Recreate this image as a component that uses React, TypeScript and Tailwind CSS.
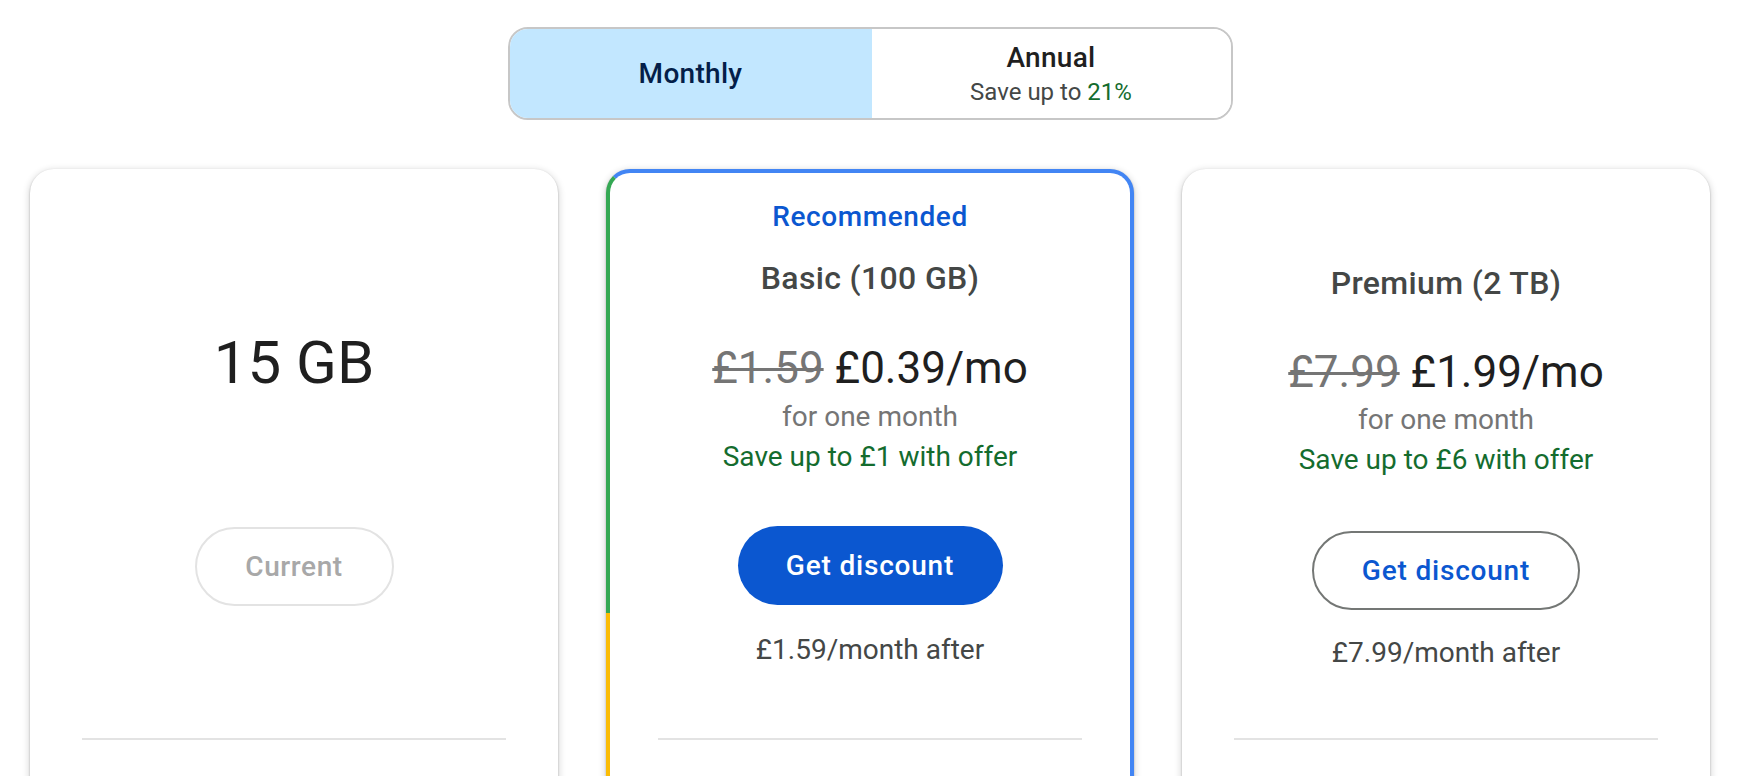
import React from "react";

const font = { fontFamily: "Roboto, 'Noto Sans', Arial, sans-serif" };

function Divider({ inset = "mx-[52px]" }: { inset?: string }) {
  return <div className={`${inset} h-[2px] bg-[#e3e3e3]`} />;
}

export default function App() {
  return (
    <div
      className="h-[776px] w-[1748px] overflow-hidden bg-white font-[Roboto,'Noto_Sans',Arial,sans-serif]"
      style={font}
    >
      <div className="ml-[30px] w-[1680px] pt-[27px]">
        {/* Toggle */}
        <div className="flex justify-center">
          <div className="flex h-[93px] w-[725px] overflow-hidden rounded-[20px] border-2 border-[#c7c7c7]">
            <div className="flex w-[362px] items-center justify-center bg-[#c2e7ff]">
              <span className="text-[28px] font-medium leading-[36px] tracking-[0.3px] text-[#041e49]">Monthly</span>
            </div>
            <div className="flex flex-1 flex-col items-center justify-center bg-white">
              <span className="text-[28px] font-medium leading-[36px] tracking-[0.3px] text-[#1f1f1f]">Annual</span>
              <span className="text-[24px] leading-[32px] text-[#444746]">
                Save up to <span className="text-[#146c2e]">21%</span>
              </span>
            </div>
          </div>
        </div>

        {/* Cards */}
        <div className="mt-[49px] grid grid-cols-3 gap-[48px]">
          {/* Card 1 */}
          <div className="h-[700px] rounded-[24px] bg-white shadow-[0_1px_2px_rgba(0,0,0,0.3),0_2px_6px_2px_rgba(0,0,0,0.12)]">
            <div className="flex h-[569px] flex-col items-center">
              <div className="mt-[158px] text-[60px] leading-[72px] text-[#1f1f1f]">15 GB</div>
              <div className="mt-[128px] flex h-[79px] w-[199px] items-center justify-center rounded-full border-2 border-[#e3e3e3] text-[28px] font-medium tracking-[0.6px] text-[#a8a8a8]">
                Current
              </div>
            </div>
            <Divider />
          </div>

          {/* Card 2 */}
          <div className="relative h-[700px] rounded-[24px] border-4 border-[#4285f4] border-l-[#34a853] bg-white shadow-[0_1px_2px_rgba(0,0,0,0.3),0_2px_6px_2px_rgba(0,0,0,0.12)]">
            <div className="absolute -left-[4px] top-[440px] bottom-[20px] w-[4px] bg-[#fbbc04]" />
            <div className="flex h-[565px] flex-col items-center">
              <div className="mt-[26px] text-[28px] font-medium leading-[36px] tracking-[0.6px] text-[#0b57d0]">Recommended</div>
              <div className="mt-[23px] text-[32px] font-medium leading-[40px] tracking-[0.35px] text-[#444746]">Basic (100 GB)</div>
              <div className="mt-[42px] text-[44px] leading-[56px] text-[#1f1f1f]">
                <span className="text-[#757575] line-through decoration-[3px]">£1.59</span> £0.39/mo
              </div>
              <div className="mt-[1px] text-[28px] leading-[40px] text-[#757575]">for one month</div>
              <div className="text-[28px] leading-[40px] text-[#146c2e]">Save up to £1 with offer</div>
              <div className="mt-[49px] flex h-[79px] w-[265px] items-center justify-center rounded-full bg-[#0b57d0] text-[28px] font-medium tracking-[0.8px] text-white">
                Get discount
              </div>
              <div className="mt-[25px] text-[28px] leading-[40px] text-[#444746]">£1.59/month after</div>
            </div>
            <Divider inset="mx-[48px]" />
          </div>

          {/* Card 3 */}
          <div className="h-[700px] rounded-[24px] bg-white shadow-[0_1px_2px_rgba(0,0,0,0.3),0_2px_6px_2px_rgba(0,0,0,0.12)]">
            <div className="flex h-[569px] flex-col items-center">
              <div className="mt-[94px] text-[32px] font-medium leading-[40px] tracking-[0.35px] text-[#444746]">Premium (2 TB)</div>
              <div className="mt-[41px] text-[44px] leading-[56px] text-[#1f1f1f]">
                <span className="text-[#757575] line-through decoration-[3px]">£7.99</span> £1.99/mo
              </div>
              <div className="text-[28px] leading-[40px] text-[#757575]">for one month</div>
              <div className="text-[28px] leading-[40px] text-[#146c2e]">Save up to £6 with offer</div>
              <div className="mt-[51px] flex h-[79px] w-[268px] items-center justify-center rounded-full border-2 border-[#747775] bg-white text-[28px] font-medium tracking-[0.8px] text-[#0b57d0]">
                Get discount
              </div>
              <div className="mt-[23px] text-[28px] leading-[40px] text-[#444746]">£7.99/month after</div>
            </div>
            <Divider />
          </div>
        </div>
      </div>
    </div>
  );
}
